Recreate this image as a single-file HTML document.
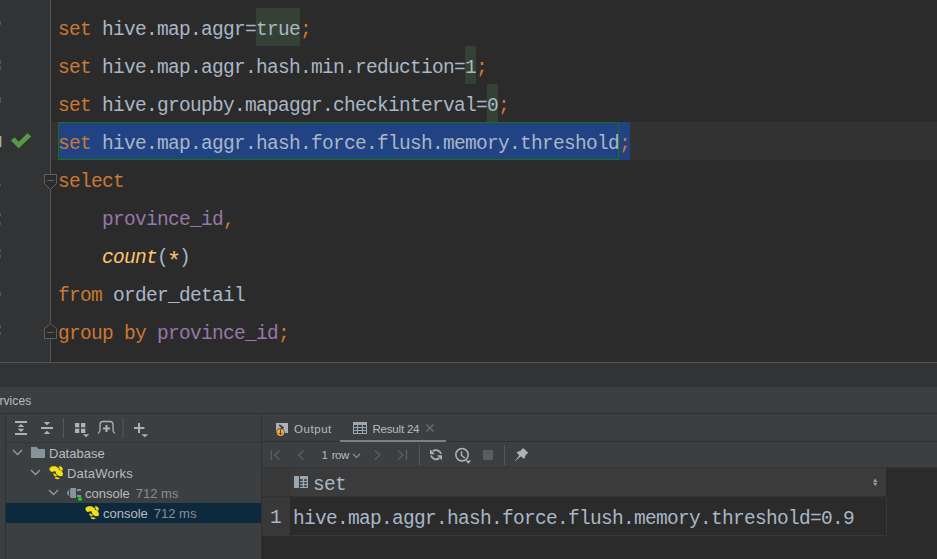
<!DOCTYPE html>
<html><head><meta charset="utf-8">
<style>
*{margin:0;padding:0;box-sizing:border-box}
html,body{width:937px;height:559px;overflow:hidden;background:#2b2b2b}
body{position:relative;font-family:"Liberation Sans",sans-serif}
.abs{position:absolute}
svg{position:absolute;overflow:visible}
#gutter{left:0;top:0;width:50px;height:362px;background:#313335}
#gline{left:50px;top:0;width:1px;height:362px;background:#555555}
#curline{left:51px;top:122px;width:886px;height:38px;background:#323232}
.code{position:absolute;left:58px;font-family:"Liberation Mono",monospace;font-size:19.5px;letter-spacing:-0.702px;white-space:pre;color:#a9b7c6;line-height:38px;height:38px;padding-top:3px}
.kw{color:#cc7832}
.col{color:#9876aa}
.fn{color:#ffc66d;font-style:italic}
.hl{position:absolute;background:#344134;height:38px}
#sel{left:58px;top:122px;width:572px;height:38px;background:#214283}
#selbox{left:58px;top:122px;width:561px;height:38px;border:1px solid #157215}
#edbot{left:0;top:362px;width:937px;height:1px;background:#555555}
#band{left:0;top:363px;width:937px;height:24px;background:#313335}
#svchdr{left:0;top:387px;width:937px;height:26px;background:#3c3f41}
#svcline{left:0;top:413px;width:937px;height:1px;background:#2f3133}
#leftpanel{left:0;top:414px;width:261px;height:145px;background:#3c3f41}
#lvline{left:5px;top:414px;width:1px;height:145px;background:#2f3133}
#ltbline{left:6px;top:442px;width:255px;height:1px;background:#323436}
#divider{left:261px;top:414px;width:1px;height:145px;background:#2f3133}
#rightpanel{left:262px;top:414px;width:675px;height:54px;background:#3c3f41}
#rtabline{left:262px;top:441px;width:675px;height:1px;background:#2e3032}
#rtbline{left:262px;top:467px;width:675px;height:1px;background:#323436}
#gridbg{left:262px;top:468px;width:675px;height:91px;background:#2b2b2b}
.ui{position:absolute;font-size:13px;color:#bbbbbb;white-space:pre;line-height:16px}
.tree{position:absolute;font-size:13px;color:#bbbbbb;line-height:20px;height:20px;white-space:pre}
.gray{color:#8c8c8c}
#treesel{left:6px;top:503px;width:255px;height:20px;background:#0d293e}
.lnum{position:absolute;right:935px;font-family:"Liberation Mono",monospace;font-size:18px;color:#606366;line-height:38px;white-space:pre}
</style></head><body>
<div id="gutter" class="abs"></div>
<div id="gline" class="abs"></div>
<div id="curline" class="abs"></div>
<div class="hl" style="left:256px;top:8px;width:44px"></div>
<div class="hl" style="left:465px;top:46px;width:11px"></div>
<div class="hl" style="left:487px;top:84px;width:11px"></div>
<div id="sel" class="abs"></div>
<div id="selbox" class="abs"></div>

<div class="code" style="top:8px"><span class="kw">set</span> hive.map.aggr=true<span class="kw">;</span></div>
<div class="code" style="top:46px"><span class="kw">set</span> hive.map.aggr.hash.min.reduction=1<span class="kw">;</span></div>
<div class="code" style="top:84px"><span class="kw">set</span> hive.groupby.mapaggr.checkinterval=0<span class="kw">;</span></div>
<div class="code" style="top:122px"><span class="kw">set</span> hive.map.aggr.hash.force.flush.memory.threshold<span class="kw">;</span></div>
<div class="code" style="top:160px"><span class="kw">select</span></div>
<div class="code" style="top:198px">    <span class="col">province_id</span><span class="kw">,</span></div>
<div class="code" style="top:236px">    <span class="fn">count</span>(<span style="display:inline-block;color:#f0c070;transform:translateY(4.5px) scale(1.25)">*</span>)</div>
<div class="code" style="top:274px"><span class="kw">from</span> order_detail</div>
<div class="code" style="top:312px"><span class="kw">group by</span> <span class="col">province_id</span><span class="kw">;</span></div>

<svg style="left:0;top:0" width="4" height="362">
  <g fill="#57534d">
    <rect x="0" y="21" width="1" height="4"/>
    <rect x="0" y="60" width="1" height="4"/><rect x="0" y="66" width="1" height="4"/>
    <rect x="0" y="97" width="1" height="6"/>
    <rect x="0" y="184" width="1" height="2"/>
    <rect x="0" y="213" width="1" height="3"/><rect x="0" y="222" width="1" height="3"/>
    <rect x="0" y="249" width="1" height="3"/><rect x="0" y="255" width="1" height="3"/>
    <rect x="0" y="292" width="1" height="4"/>
    <rect x="0" y="325" width="1" height="3"/><rect x="0" y="332" width="1" height="3"/>
  </g>
  <rect x="0" y="136" width="1.3" height="11" fill="#b9ab85"/>
</svg>
<!-- check mark -->
<svg style="left:0;top:0" width="937" height="362">
  <path d="M14.6 137.2 L10.9 140.4 L18.7 148.2 L31.1 136.4 L27.7 132.9 L18.7 141.7 Z" fill="#579a46"/>
  <!-- fold start -->
  <path d="M44.5 174.5 H56.5 V183.5 L50.5 189.5 L44.5 183.5 Z" fill="#2b2b2b" stroke="#5f5f5f" stroke-width="1"/>
  <path d="M47 180.5 H54" stroke="#5f5f5f" stroke-width="1"/>
  <!-- fold end -->
  <path d="M44.5 338.5 H56.5 V328.5 L50.5 323.5 L44.5 328.5 Z" fill="#2b2b2b" stroke="#5f5f5f" stroke-width="1"/>
  <path d="M47 332.5 H54" stroke="#5f5f5f" stroke-width="1"/>
</svg>

<div id="edbot" class="abs"></div>
<div id="band" class="abs"></div>
<div id="svchdr" class="abs"></div>
<div class="ui" style="left:-15.5px;top:393px;font-size:12px;letter-spacing:0.1px">Services</div>
<div id="svcline" class="abs"></div>
<div id="leftpanel" class="abs"></div>
<div id="lvline" class="abs"></div>
<div id="ltbline" class="abs"></div>
<div id="treesel" class="abs"></div>
<div id="divider" class="abs"></div>
<div id="rightpanel" class="abs"></div>
<div id="rtabline" class="abs"></div>
<div id="rtbline" class="abs"></div>
<div id="gridbg" class="abs"></div>

<!-- left toolbar icons -->
<svg style="left:0;top:0" width="937" height="559">
  <g fill="#afb1b3">
    <rect x="15" y="421" width="12" height="2"/>
    <path d="M17.7 427 L21 424 L24.3 427 Z"/>
    <path d="M17.7 428.8 L21 432 L24.3 428.8 Z"/>
    <rect x="15" y="433" width="12" height="2"/>
    <path d="M43.7 422 L47 425.2 L50.3 422 Z"/>
    <rect x="41" y="427" width="12" height="2"/>
    <path d="M43.7 434 L47 430.8 L50.3 434 Z"/>
    <rect x="75" y="423" width="4.3" height="4.3"/>
    <rect x="81" y="423" width="4.3" height="4.3"/>
    <rect x="75" y="428.7" width="4.3" height="4.3"/>
    <rect x="81" y="428.7" width="4.3" height="4.3"/>
    <path d="M83 434.2 L89.2 434.2 L86.1 437.2 Z"/>
    <rect x="105.5" y="425" width="2" height="7"/>
    <rect x="103" y="427.5" width="7" height="2"/>
    <rect x="138" y="423" width="2" height="10"/>
    <rect x="134" y="427" width="10.4" height="2"/>
    <path d="M141.5 434.2 L148.2 434.2 L144.85 437.2 Z"/>
  </g>
  <path d="M98 433.5 Q100 432.5 100 430 V424.5 Q100 421.5 103 421.5 H110 Q113 421.5 113 424.5 V430 Q113 432.5 115 433.5" fill="none" stroke="#afb1b3" stroke-width="1.3"/>
  <rect x="63" y="418" width="1" height="20" fill="#55585a"/>
  <rect x="122.5" y="418" width="1" height="20" fill="#55585a"/>

  <!-- tree chevrons -->
  <g fill="none" stroke="#9a9c9e" stroke-width="1.3">
    <path d="M13 450 L17.5 454.5 L22 450"/>
    <path d="M31 470 L35.5 474.5 L40 470"/>
    <path d="M49 490 L53.5 494.5 L58 490"/>
  </g>
  <!-- folder -->
  <path d="M31 447 H36.5 L38.5 449 H45 V458 H31 Z" fill="#87939a"/>
  <!-- console plug icon -->
  <g fill="#87939a">
    <path d="M69 490 V496 Q67 495 67 493 Q67 491 69 490 Z"/>
    <path d="M71 488 H76 V498 H71 L70 497 V489 Z"/>
    <rect x="77" y="489" width="4" height="2"/>
    <rect x="77" y="495" width="4" height="2"/>
  </g>
  <circle cx="80" cy="499" r="2.1" fill="#0cd80c"/>
  <!-- hive icons -->
  <g id="hive" fill="#f2e012">
    <path d="M49.5 468 L52 466.3 L55.5 466.3 L58.5 468 L59.5 470.5 L57.5 471.8 L54.5 471.3 L51.5 472 L49.6 470.3 Z"/>
    <path d="M58.8 466.2 L61.2 466.5 L62.8 468.5 L62.6 470.5 L60.5 470.6 L59.5 468.5 Z"/>
    <path d="M55.5 471.5 L58.5 469.8 L61.5 470.8 L63 473.5 L62.5 476 L59.5 476.2 L56.5 474.5 Z"/>
    <path d="M53.2 473.3 L55 473.8 L57 475.8 L55.5 476.6 L53.6 475.2 Z"/>
    <path d="M54.5 477.2 L57.5 477.3 L60 478.6 L57.5 479.2 L55.5 478.8 Z"/>
  </g>
  <use href="#hive" x="36" y="40"/>

  <!-- right tabs -->
  <rect x="276" y="423" width="12" height="10" fill="#afb1b3"/>
  <path d="M279.2 424.9 L282.8 427.6 L281.2 429" fill="none" stroke="#3a3c3e" stroke-width="1.7"/>
  <circle cx="280.5" cy="432.5" r="4.3" fill="#3c3f41"/><circle cx="280.5" cy="432.5" r="3.6" fill="#f4af3d"/>
  <path d="M280.5 429.5 V434.5 M278.5 432.8 L280.5 434.8 L282.5 432.8" fill="none" stroke="#5a4110" stroke-width="1"/>
  <!-- result table icon -->
  <rect x="353" y="422" width="14" height="12" fill="#9aa7b0"/>
  <g fill="#3c3f41">
    <rect x="354" y="425" width="3" height="2"/><rect x="358" y="425" width="4" height="2"/><rect x="363" y="425" width="3" height="2"/>
    <rect x="354" y="428" width="3" height="2"/><rect x="358" y="428" width="4" height="2"/><rect x="363" y="428" width="3" height="2"/>
    <rect x="354" y="431" width="3" height="2"/><rect x="358" y="431" width="4" height="2"/><rect x="363" y="431" width="3" height="2"/>
  </g>
  <path d="M426.5 424.5 L433.5 431.5 M433.5 424.5 L426.5 431.5" stroke="#6e7073" stroke-width="1.1"/>
  <rect x="340" y="440" width="106" height="2" fill="#7c8187"/>

  <!-- result toolbar -->
  <g fill="none" stroke="#5c5f61" stroke-width="1.3">
    <path d="M271.3 450 V460"/>
    <path d="M279.5 450.5 L274.5 455 L279.5 459.5"/>
    <path d="M303.5 450.5 L298.5 455 L303.5 459.5"/>
    <path d="M375 450.5 L380 455 L375 459.5"/>
    <path d="M398 450.5 L403 455 L398 459.5"/>
    <path d="M406.5 450 V460"/>
  </g>
  <path d="M353 454 L356.5 457.5 L360 454" fill="none" stroke="#8c8c8c" stroke-width="1.2"/>
  <rect x="419" y="445" width="1" height="20" fill="#55585a"/>
  <rect x="504" y="445" width="1" height="20" fill="#55585a"/>
  <!-- refresh -->
  <g fill="none" stroke="#afb1b3" stroke-width="1.8">
    <path d="M441 453.8 A5.1 5.1 0 0 0 432.8 451.3"/>
    <path d="M431 455.6 A5.1 5.1 0 0 0 439.3 458"/>
  </g>
  <path d="M430 449.3 L430 454.2 L434.9 454.2 Z" fill="#afb1b3"/>
  <path d="M442 460.2 L442 455.3 L437.1 455.3 Z" fill="#afb1b3"/>
  <!-- clock -->
  <circle cx="462" cy="454.7" r="6.2" fill="none" stroke="#afb1b3" stroke-width="1.6"/>
  <path d="M461.5 451.2 V455.5 L464.8 458" fill="none" stroke="#afb1b3" stroke-width="1.5"/>
  <path d="M465.3 460.6 H471.2 L468.25 463.7 Z" fill="#afb1b3"/>
  <!-- stop -->
  <rect x="483" y="450" width="10" height="10" fill="#5a5c5e"/>
  <!-- pin -->
  <path d="M523 448 L528.3 452.8 L525.8 455 L524 459 L521 456.3 L514.2 462 L519.2 455.5 L516.5 452.2 L520.5 450.8 Z" fill="#afb1b3"/>
</svg>

<div class="tree" style="left:49px;top:444px">Database</div>
<div class="tree" style="left:67px;top:464px;letter-spacing:0.2px">DataWorks</div>
<div class="tree" style="left:85px;top:484px">console<span style="display:inline-block;width:6px"></span><span class="gray">712 ms</span></div>
<div class="tree" style="left:103px;top:504px">console<span style="display:inline-block;width:6px"></span><span class="gray">712 ms</span></div>

<div class="ui" style="left:294px;top:420.5px;font-size:11.5px;letter-spacing:0.55px">Output</div>
<div class="ui" style="left:372.5px;top:420.5px;font-size:11.5px;letter-spacing:-0.2px">Result 24</div>
<div class="ui" style="left:321.5px;top:446.5px;font-size:11.5px;letter-spacing:-0.55px;word-spacing:1.8px">1 row</div>

<!-- grid -->
<div class="abs" style="left:262px;top:468px;width:624px;height:29px;background:#3b3b3b"></div>
<div class="abs" style="left:262px;top:468px;width:28px;height:29px;background:#393939"></div><div class="abs" style="left:289px;top:468px;width:1px;height:29px;background:#363636"></div>
<div class="abs" style="left:262px;top:496px;width:624px;height:1px;background:#303336"></div>
<div class="abs" style="left:262px;top:497px;width:28px;height:39px;background:#383838"></div>
<div class="abs" style="left:290px;top:535px;width:597px;height:1px;background:#383838"></div>
<div class="abs" style="left:886px;top:497px;width:1px;height:39px;background:#383838"></div>
<svg style="left:0;top:0" width="937" height="559">
  <rect x="294" y="476" width="5" height="12" fill="#9aa7b0"/>
  <rect x="300" y="476" width="8" height="12" fill="#9aa7b0"/>
  <g fill="#3a3a3a">
    <rect x="299.8" y="479.2" width="2.9" height="1.7"/><rect x="304.1" y="479.2" width="2.7" height="1.7"/>
    <rect x="299.8" y="482.2" width="2.9" height="1.7"/><rect x="304.1" y="482.2" width="2.7" height="1.7"/>
    <rect x="299.8" y="485.2" width="2.9" height="1.7"/><rect x="304.1" y="485.2" width="2.7" height="1.7"/>
  </g>
  <path d="M873 482 L875.25 478.5 L877.5 482 Z M873 482.8 L875.25 486.3 L877.5 482.8 Z" fill="#9a9a9a"/>
</svg>
<div class="code" style="left:313px;top:463px;height:34px">set</div>
<div class="code" style="left:293px;top:497px">hive.map.aggr.hash.force.flush.memory.threshold=0.9</div>
<div class="code" style="left:270px;top:496px">1</div>
</body></html>
